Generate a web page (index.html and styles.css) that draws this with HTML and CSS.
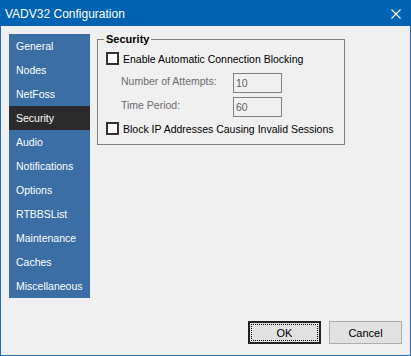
FILE: index.html
```html
<!DOCTYPE html>
<html lang="en">
<head>
  <meta charset="UTF-8" />
  <title>VADV32 Configuration</title>
  <link rel="stylesheet" href="styles.css">
</head>
<body>

  <div class="window">
    <div class="titlebar">
      <span class="title">VADV32 Configuration</span>
      <svg class="close" width="10" height="10" viewBox="0 0 10 10">
        <path d="M0.5 0.5 L9.5 9.5 M9.5 0.5 L0.5 9.5" stroke="#fff" stroke-width="1.1" fill="none" />
      </svg>
    </div>

    <div class="content">
      <ul class="nav">
        <li>General</li>
        <li>Nodes</li>
        <li>NetFoss</li>
        <li class="active">Security</li>
        <li>Audio</li>
        <li>Notifications</li>
        <li>Options</li>
        <li>RTBBSList</li>
        <li>Maintenance</li>
        <li>Caches</li>
        <li>Miscellaneous</li>
      </ul>

      <fieldset class="group">
        <legend>Security</legend>
        <label class="check"><span class="box"></span>Enable Automatic Connection Blocking</label>
        <div class="field first">
          <span class="field-label">Number of Attempts:</span>
          <span class="input">10</span>
        </div>
        <div class="field">
          <span class="field-label">Time Period:</span>
          <span class="input">60</span>
        </div>
        <label class="check last"><span class="box"></span>Block IP Addresses Causing Invalid Sessions</label>
      </fieldset>
    </div>

    <div class="buttons">
      <button class="btn default"><span class="focus">OK</span></button>
      <button class="btn">Cancel</button>
    </div>
  </div>

</body>
</html>
```

FILE: styles.css
```css
* {
  margin: 0; padding: 0; box-sizing: border-box;
  font-family: 'Liberation Sans', Arial, sans-serif;
}

body {
  background: #fff;
}

.window {
  width: 411px;
  height: 356px;
  border: 1px solid #1a6fb8;
  border-top: none;
  background: #f0f0f0;
  display: flex;
  flex-direction: column;
}

.titlebar {
  height: 26px;
  margin: 0 -1px;
  background: #0063b1;
  display: flex;
  align-items: center;
  justify-content: space-between;
  padding: 0 10px 0 5px;
  color: #fff;
}

.title {
  font-size: 12px;
  padding-top: 1px;
}

.close {
  display: block;
  margin-top: 1px;
}

.content {
  display: flex;
  align-items: flex-start;
  padding-left: 8px;
}

.nav {
  list-style: none;
  width: 81px;
  margin-top: 8px;
  background: #3a6ea5;
}

.nav li {
  height: 24px;
  line-height: 24px;
  padding-left: 7px;
  font-size: 10.5px;
  color: #fff;
}

.nav li.active {
  background: #2b2b2b;
}

.group {
  width: 248px;
  margin: 6px 0 0 7px;
  border: 1px solid #7f7f7f;
  padding: 0 8px 9px 8px;
}

.group legend {
  font-size: 11px;
  font-weight: bold;
  line-height: 14px;
  padding: 0 2px;
  margin-left: -2px;
  color: #000;
}

.check {
  display: flex;
  align-items: center;
  height: 13px;
  margin-top: 6px;
  font-size: 10.5px;
  white-space: nowrap;
  color: #000;
}

.check.last {
  margin-top: 5px;
}

.box {
  flex: none;
  width: 13px;
  height: 13px;
  border: 2px solid #333;
  background: #fff;
  margin-right: 4px;
}

.field {
  display: flex;
  align-items: flex-start;
  height: 20px;
  margin-top: 4px;
  padding-left: 15px;
  font-size: 10.5px;
  color: #6d6d6d;
}

.field.first {
  margin-top: 8px;
}

.field-label {
  width: 112px;
  padding-top: 2px;
}

.input {
  width: 49px;
  height: 20px;
  border: 1px solid #838383;
  padding: 3px 0 0 2px;
  color: #5f5f5f;
}

.buttons {
  margin-top: auto;
  display: flex;
  justify-content: flex-end;
  gap: 8px;
  padding: 0 8px 11px 0;
}

.btn {
  width: 73px;
  height: 23px;
  background: #e1e1e1;
  border: 1px solid #adadad;
  font-size: 11px;
  color: #000;
}

.btn.default {
  border: 1px solid #222;
  box-shadow: inset 0 0 0 1px #222;
  padding: 2px;
}

.focus {
  display: flex;
  align-items: center;
  justify-content: center;
  height: 100%;
  border: 1px dotted #000;
}
```
